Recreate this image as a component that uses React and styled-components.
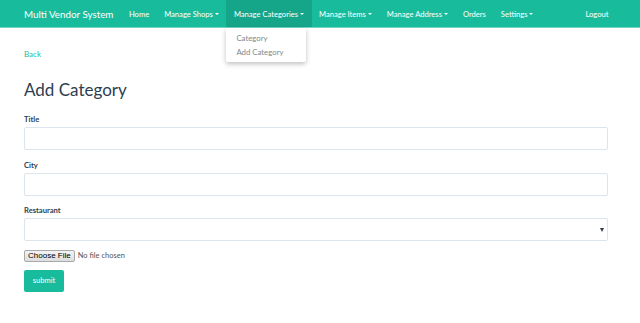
import React from 'react';
import styled, { createGlobalStyle } from 'styled-components';

const Global = createGlobalStyle`
  body {
    margin: 0;
    font-family: Lato, "Open Sans", sans-serif;
    color: #2c3e50;
    background: #fff;
  }
  * { box-sizing: border-box; }
`;

const NavBar = styled.div`
  display: flex;
  align-items: stretch;
  height: 28px;
  padding: 0 24px;
  background-color: #18bc9c;
  border-bottom: 1px solid #72d8c3;
  white-space: nowrap;
`;

const Brand = styled.div`
  display: flex;
  align-items: center;
  font-size: 9.8px;
  color: #fff;
  margin-right: 8px;
`;

const NavList = styled.ul`
  display: flex;
  list-style: none;
  margin: 0;
  padding: 0;
  flex: 1;

  .right {
    margin-left: auto;
  }
`;

const NavItem = styled.li`
  position: relative;
  display: flex;
  align-items: center;
  padding: 0 7.5px;
  font-size: 7.6px;
  color: #fff;
  background-color: ${p => (p.$active ? '#15a589' : 'transparent')};
`;

const Caret = styled.span`
  display: inline-block;
  margin-left: 2px;
  border-top: 2.5px solid #fff;
  border-left: 2px solid transparent;
  border-right: 2px solid transparent;
`;

const Dropdown = styled.div`
  position: absolute;
  top: 28px;
  left: 0;
  width: 80px;
  padding: 3px 0;
  background: #fff;
  border-radius: 0 0 2px 2px;
  box-shadow: 0 2px 5px rgba(0, 0, 0, 0.25);
  z-index: 5;
`;

const DropItem = styled.div`
  padding: 1px 10px;
  font-size: 7.8px;
  line-height: 12px;
  color: #7b8a8b;
`;

const Container = styled.div`
  padding: 0 32px 0 24px;
`;

const BackLink = styled.a`
  display: block;
  margin-top: 21px;
  font-size: 8px;
  color: #18bc9c;
  text-decoration: none;
`;

const Title = styled.h2`
  margin: 21px 0 15px;
  font-size: 17px;
  font-weight: 400;
  line-height: 20px;
  color: #2c3e50;
`;

const Group = styled.div`
  margin-bottom: 10.5px;
`;

const Label = styled.label`
  display: block;
  margin-bottom: 3px;
  font-size: 7.6px;
  line-height: 9px;
  font-weight: 700;
  color: #2c3e50;
`;

const Input = styled.input`
  display: block;
  width: 100%;
  height: 23px;
  border: 1px solid #dce4ec;
  border-radius: 2px;
  background: #fff;
  outline: none;
`;

const Select = styled.div`
  position: relative;
  height: 23px;
  border: 1px solid #dce4ec;
  border-radius: 2px;
  background: #fff;

  &::after {
    content: '';
    position: absolute;
    right: 3px;
    top: 9px;
    border-top: 4px solid #2c3e50;
    border-left: 2px solid transparent;
    border-right: 2px solid transparent;
  }
`;

const FileRow = styled.div`
  display: flex;
  align-items: center;
  gap: 3px;
  margin-top: -2px;
  font-size: 7.5px;
  line-height: 12px;
  color: #555;
`;

const FileButton = styled.span`
  padding: 0 3px;
  line-height: 10px;
  border: 1px solid #a8a8a8;
  border-radius: 2px;
  background: linear-gradient(#f4f4f4, #dedede);
  color: #000;
  font-family: "Liberation Sans", Arial, sans-serif;
  font-size: 8px;
`;

const Submit = styled.button`
  display: block;
  margin-top: 8px;
  height: 22px;
  width: 40px;
  padding: 0;
  border: 0;
  border-radius: 2px;
  background-color: #18bc9c;
  color: #fff;
  font-family: Lato, sans-serif;
  font-size: 7.5px;
`;

export default function App() {
  return (
    <>
      <Global />
      <NavBar>
        <Brand>Multi Vendor System</Brand>
        <NavList>
          <NavItem>Home</NavItem>
          <NavItem>Manage Shops<Caret /></NavItem>
          <NavItem $active>
            Manage Categories<Caret />
            <Dropdown>
              <DropItem>Category</DropItem>
              <DropItem>Add Category</DropItem>
            </Dropdown>
          </NavItem>
          <NavItem>Manage Items<Caret /></NavItem>
          <NavItem>Manage Address<Caret /></NavItem>
          <NavItem>Orders</NavItem>
          <NavItem>Settings<Caret /></NavItem>
          <NavItem className="right">Logout</NavItem>
        </NavList>
      </NavBar>
      <Container>
        <BackLink href="#">Back</BackLink>
        <Title>Add Category</Title>
        <Group>
          <Label>Title</Label>
          <Input />
        </Group>
        <Group>
          <Label>City</Label>
          <Input />
        </Group>
        <Group>
          <Label>Restaurant</Label>
          <Select />
        </Group>
        <FileRow>
          <FileButton>Choose File</FileButton>
          <span>No file chosen</span>
        </FileRow>
        <Submit>submit</Submit>
      </Container>
    </>
  );
}
